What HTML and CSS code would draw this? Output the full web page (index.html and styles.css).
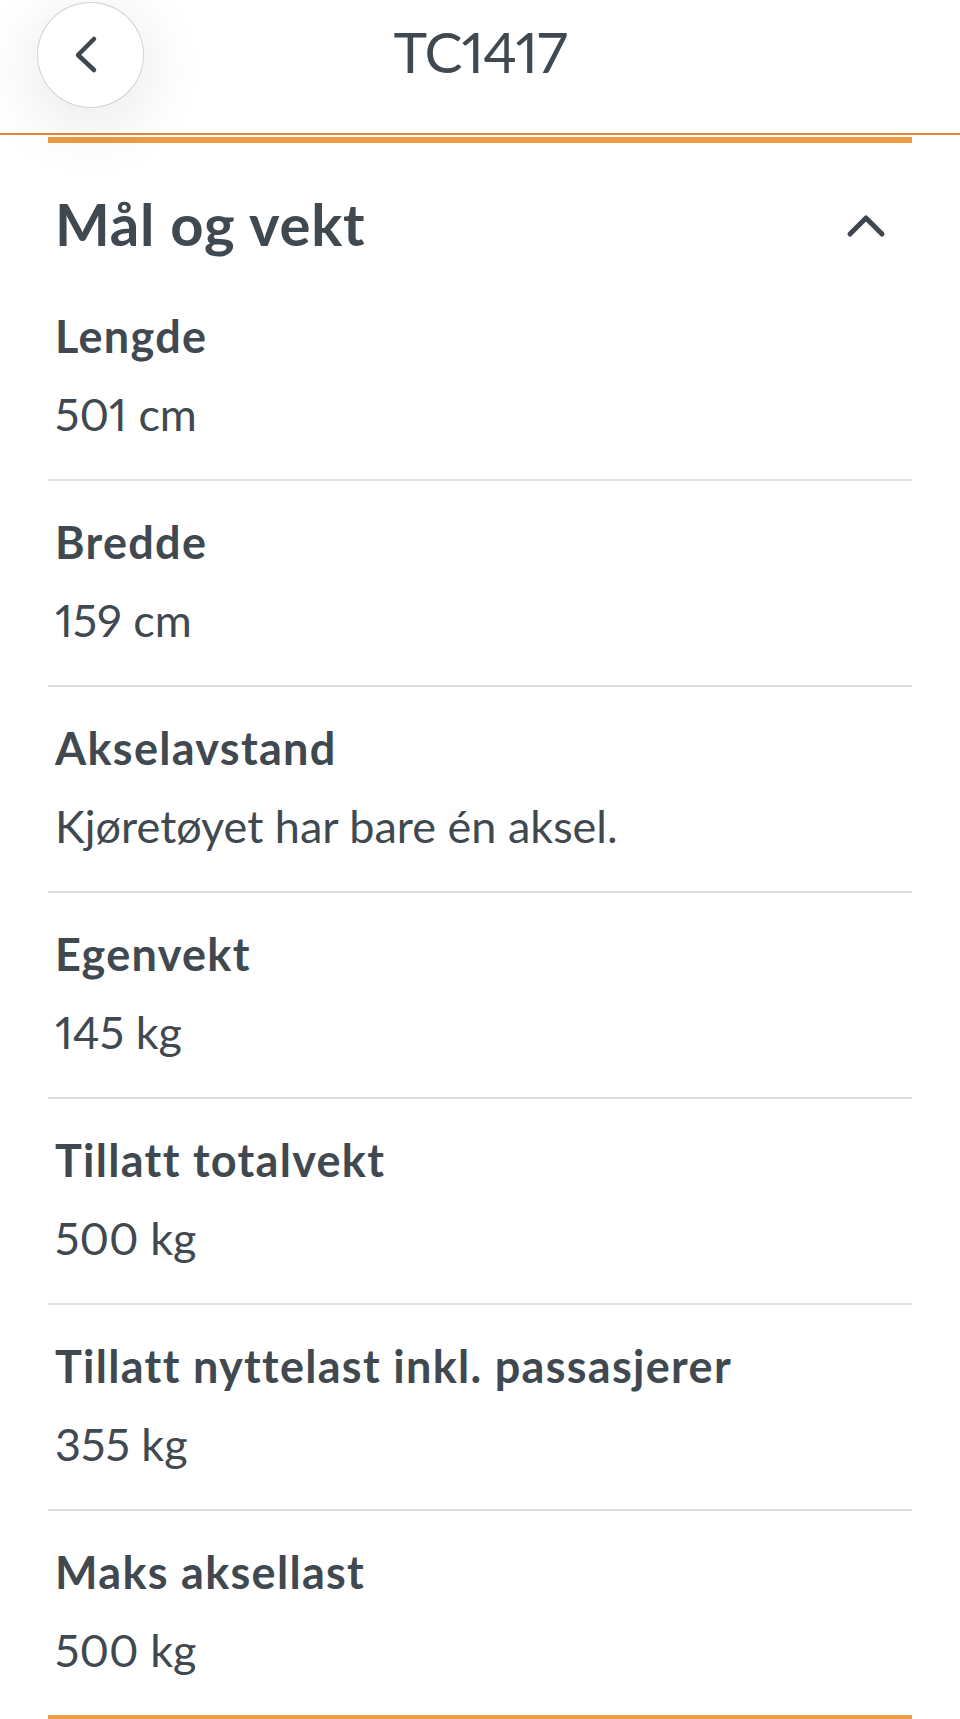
FILE: index.html
```html
<!DOCTYPE html>
<html lang="no">
<head>
    <meta charset="UTF-8">
    <meta name="viewport" content="width=device-width, initial-scale=1.0">
    <title>TC1417</title>
    <link rel="stylesheet" href="styles.css">
</head>
<body>
    <header class="topbar">
        <button class="back-btn" aria-label="Tilbake">
            <svg width="38" height="46" viewBox="0 0 38 46">
                <path d="M26 7 L10 23 L26 38" fill="none" stroke="currentColor" stroke-width="4.5" stroke-linecap="round" stroke-linejoin="round"/>
            </svg>
        </button>
        <h1 class="topbar-title">TC1417</h1>
        <span></span>
    </header>

    <!-- Mål og vekt -->
    <section class="card">
        <div class="card-head">
            <h2>Mål og vekt</h2>
            <svg class="toggle" width="40" height="26" viewBox="0 0 40 26">
                <path d="M4 21 L20 5 L36 21" fill="none" stroke="currentColor" stroke-width="5" stroke-linecap="round" stroke-linejoin="round"/>
            </svg>
        </div>
        <div class="row">
            <div class="label">Lengde</div>
            <div class="value">501 cm</div>
        </div>
        <div class="row">
            <div class="label">Bredde</div>
            <div class="value">159 cm</div>
        </div>
        <div class="row">
            <div class="label">Akselavstand</div>
            <div class="value">Kjøretøyet har bare én aksel.</div>
        </div>
        <div class="row">
            <div class="label">Egenvekt</div>
            <div class="value">145 kg</div>
        </div>
        <div class="row">
            <div class="label">Tillatt totalvekt</div>
            <div class="value">500 kg</div>
        </div>
        <div class="row">
            <div class="label">Tillatt nyttelast inkl. passasjerer</div>
            <div class="value">355 kg</div>
        </div>
        <div class="row">
            <div class="label">Maks aksellast</div>
            <div class="value">500 kg</div>
        </div>
    </section>
</body>
</html>
```

FILE: styles.css
```css
body {
    margin: 0;
    padding: 0;
    font-family: Lato, "Open Sans", "DejaVu Sans", sans-serif;
    color: #414950;
    background: #fff;
}
.topbar {
    position: relative;
    z-index: 1;
    height: 131px;
    padding: 2px 37px 0;
    display: grid;
    grid-template-columns: 107px 1fr 107px;
    align-items: start;
    background: #fff;
    border-bottom: 2px solid #e2893a;
}
.back-btn {
    width: 107px;
    height: 106px;
    padding: 0;
    border: 1px solid #d2d2d2;
    border-radius: 50%;
    background: #fff;
    color: #3e464e;
    display: flex;
    align-items: center;
    justify-content: center;
    box-shadow: 0 14px 60px 12px rgba(0,0,0,0.07);
    cursor: pointer;
}
.back-btn svg {
    margin-left: -8px;
}
.topbar-title {
    margin: 15px 0 0;
    text-align: center;
    font-size: 57px;
    font-weight: normal;
    line-height: 68px;
    font-variant-numeric: proportional-nums;
    letter-spacing: -1px;
}
.card {
    margin: 2px 48px 0;
    border-top: 6px solid #ef9c42;
    border-bottom: 6px solid #ef9c42;
}
.card-head {
    display: flex;
    justify-content: space-between;
    align-items: center;
    padding: 46px 26px 16px 7px;
}
.card-head h2 {
    margin: 0;
    font-size: 58px;
    line-height: 70px;
    font-weight: bold;
    letter-spacing: 0.8px;
}
.toggle {
    color: #3e464e;
    margin-top: 3px;
}
.row {
    padding: 22px 7px 26px;
}
.row + .row {
    border-top: 2px solid #dedede;
}
.label {
    font-size: 45px;
    line-height: 78px;
    font-weight: bold;
    letter-spacing: 1.3px;
}
.value {
    font-size: 45px;
    line-height: 78px;
    font-variant-numeric: proportional-nums;
}
```
